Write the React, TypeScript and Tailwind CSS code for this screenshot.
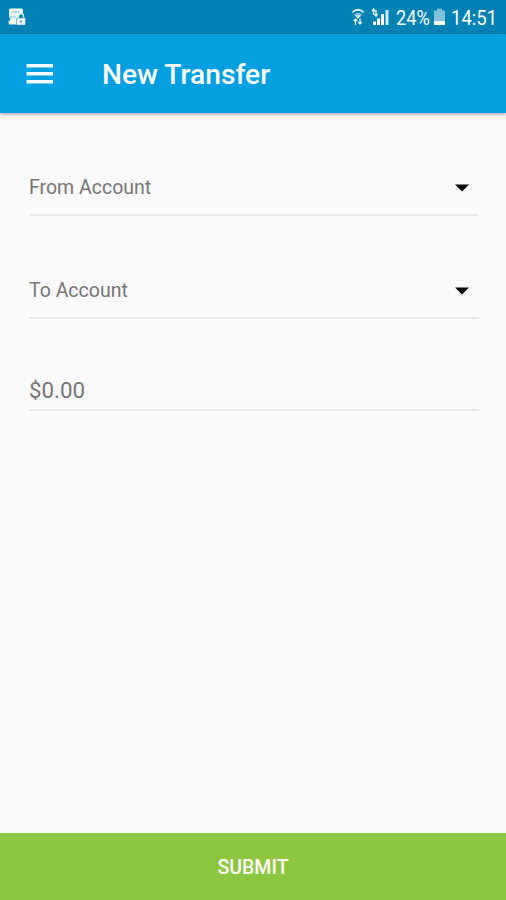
import React, { useState } from 'react';

const StatusBar: React.FC = () => (
  <div className="h-[34px] shrink-0 bg-[#0181b4] text-white flex items-center justify-between pl-[7px] pr-[9px]">
    <svg width="20" height="20" viewBox="0 0 20 20" fill="none">
      <path d="M4 1.500h10.500q1.500 0 1.500 2V6h-3l-1 3v8.500H2.500q-1.500-1-1-3l2-2.500-1.500-2V3.500Q2 1.500 4 1.500Z" fill="#f0f9fc" />
      <path d="M5.500 5h7" stroke="#8cc5dd" strokeWidth="1.200" />
      <path d="M3 10h6" stroke="#8cc5dd" />
      <path d="M11.500 11V9a2.500 2.500 0 0 1 5 0v2" stroke="#dff1f8" strokeWidth="1.300" />
      <path d="M9.500 11h9v7h-9z" fill="#fff" stroke="#278fbb" strokeWidth=".6" />
      <circle cx="14" cy="14.500" r="1.200" fill="#5ba9cc" />
    </svg>
    <div className="flex items-center">
      <svg className="mr-[6px]" width="14" height="18" viewBox="0 0 14 18" fill="none">
        <path d="M1.300 4.300Q7-.8 12.700 4.300" stroke="#e3f3fa" strokeWidth="1.700" />
        <path d="M3 6.500Q7 3.500 11 6.500L7 11Z" fill="#d3ebf5" />
        <path d="M3.800 7Q7 5 10.200 7" stroke="#2b91bd" strokeWidth=".8" />
        <path d="M4.500 11v6M2.800 13l1.700-2 1.700 2M9 10.500v5.500M7.300 14l1.700 2 1.700-2" stroke="#e3f3fa" strokeWidth="1.400" />
      </svg>
      <svg className="mr-[6px]" width="19" height="18" viewBox="0 0 19 18" fill="none">
        <path d="M2.500 1v6M1 3l1.500-2L4 3M5 2v6M3.500 6 5 8l1.500-2" stroke="#e3f3fa" strokeWidth="1.400" />
        <path d="M2 13.500h3V17H2zM6 10.500h3V17H6zM10 6h3v11h-3z" fill="#fff" />
        <path d="M14.500 2h3v15h-3z" fill="#d3ebf5" />
      </svg>
      <span className="w-[34px] text-[21px] leading-none whitespace-nowrap">
        <span className="inline-block origin-left scale-x-[.87] translate-y-px">24%</span>
      </span>
      <svg className="ml-[4px] mr-[6px]" width="11" height="18" viewBox="0 0 11 18">
        <path d="M3 .8h5v1.700h3v10.500H0V2.500h3z" fill="#80c0da" />
        <path d="M0 13h11v4H0z" fill="#fff" />
      </svg>
      <span className="w-[46px] text-[21px] leading-none whitespace-nowrap">
        <span className="inline-block origin-left scale-x-[.88] translate-y-px">14:51</span>
      </span>
    </div>
  </div>
);

interface AccountSelectProps {
  label: string;
  className?: string;
}

const AccountSelect: React.FC<AccountSelectProps> = ({ label, className = '' }) => (
  <button
    type="button"
    className={`flex w-full items-center justify-between border-b-2 border-[#e7e7e7] pt-[2px] pr-[10px] text-left text-[19.5px] text-[#757575] ${className}`}
  >
    <span>{label}</span>
    <svg width="14" height="8" viewBox="0 0 14 8">
      <path d="M0 .5h14L7 7.500Z" fill="#000" />
    </svg>
  </button>
);

export default function App() {
  const [amount, setAmount] = useState('');

  return (
    <div className="flex h-[900px] w-full flex-col overflow-hidden bg-[#fafafa] font-[Roboto,sans-serif]">
      <StatusBar />
      <header className="flex h-[79px] shrink-0 items-center bg-[#02a0e1] pl-[26px] text-white shadow-[0_1px_4px_rgba(0,0,0,0.4)]">
        <button type="button" aria-label="Menu" className="mr-[48px]">
          <svg width="27" height="20" viewBox="0 0 27 20">
            <path d="M.5 0h26.500v3.500H.500zM.5 8h26.500v3.500H.500zM.5 16h26.500v3.500H.500z" fill="#f2fbff" />
          </svg>
        </button>
        <h1 className="pt-[2px] pl-px text-[28.2px] font-medium leading-8">New Transfer</h1>
      </header>

      <form className="flex flex-1 flex-col" onSubmit={(e) => e.preventDefault()}>
        <div className="flex-1 pr-[27px] pl-[29px] pt-[47px]">
          <AccountSelect label="From Account" className="h-14" />
          <AccountSelect label="To Account" className="mt-[47px] h-14" />
          <input
            type="text"
            value={amount}
            onChange={(e) => setAmount(e.target.value)}
            placeholder="$0.00"
            className="mt-[52px] block h-10 w-full border-b-2 border-[#e7e7e7] text-[22.3px] text-[#757575] outline-none placeholder:text-[#757575]"
          />
        </div>
        <button type="submit" className="h-[67px] shrink-0 bg-[#8dc63f] pt-[3px] text-[19.5px] font-medium text-white">
          SUBMIT
        </button>
      </form>
    </div>
  );
}
